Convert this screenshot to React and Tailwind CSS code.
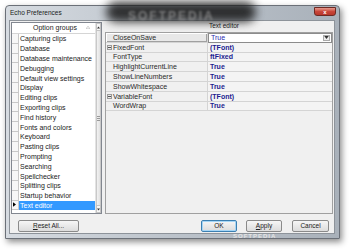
import { Fragment } from 'react'

const groups = [
  'Capturing clips',
  'Database',
  'Database maintenance',
  'Debugging',
  'Default view settings',
  'Display',
  'Editing clips',
  'Exporting clips',
  'Find history',
  'Fonts and colors',
  'Keyboard',
  'Pasting clips',
  'Prompting',
  'Searching',
  'Spellchecker',
  'Splitting clips',
  'Startup behavior',
  'Text editor',
]

const props = [
  { name: 'CloseOnSave', value: 'True', editing: true },
  { name: 'FixedFont', value: '(TFont)', expand: true },
  { name: 'FontType', value: 'ftFixed' },
  { name: 'HighlightCurrentLine', value: 'True' },
  { name: 'ShowLineNumbers', value: 'True' },
  { name: 'ShowWhitespace', value: 'True' },
  { name: 'VariableFont', value: '(TFont)', expand: true },
  { name: 'WordWrap', value: 'True' },
]

function Arrow({ up }) {
  return (
    <svg viewBox="0 0 6 4" className="h-[3px] w-[5px]">
      <path d={up ? 'M0 4 L3 0 L6 4 Z' : 'M0 0 L6 0 L3 4 Z'} fill="#333" />
    </svg>
  )
}

function Button({ children, focus, className = '' }) {
  return (
    <button
      className={
        'flex h-[12px] items-center justify-center rounded-[2px] border bg-gradient-to-b from-[#f6f6f6] to-[#dcdcdc] text-[6.5px] text-[#222] ' +
        (focus ? 'border-[#3c7fb1] shadow-[inset_0_0_0_1px_#a6d6f6] ' : 'border-[#8a8a8a] ') +
        className
      }
    >
      {children}
    </button>
  )
}

export default function App() {
  return (
    <div
      className="h-[250px] w-[350px] overflow-hidden bg-white pl-[5px] pt-[5px]"
      style={{ fontFamily: '"Liberation Sans", Arial, sans-serif' }}
    >
      <div className="relative flex h-[234px] w-[335px] flex-col rounded-t-[4px] border border-[#6b7078] bg-gradient-to-r from-[#d6dbe1] via-[#bcc3cb] to-[#a9b1ba] shadow-[2px_3px_6px_rgba(0,0,0,0.45)]">
        {/* title bar */}
        <div className="relative flex h-[14px] items-center pl-[4px]">
          <span className="text-[6.5px] text-[#1a1a1a]">Echo Preferences</span>
          <div className="absolute left-[100px] top-[-4px] h-[20px] w-[150px] rounded-full bg-[#151515] opacity-85 blur-[5px]" />
          <span className="absolute left-[122px] top-[1px] text-[12px] font-bold tracking-[2px] text-[#9a9a9a] opacity-70 blur-[0.8px]">
            SOFTPEDIA
          </span>
          <div className="absolute right-[3px] top-[1px] flex h-[9px] w-[22px] items-center justify-center rounded-b-[3px] border border-[#6d2a24] bg-gradient-to-b from-[#e59a8f] via-[#c9463a] to-[#b8372b]">
            <span className="text-[6px] font-bold leading-none text-white">x</span>
          </div>
        </div>

        {/* client area */}
        <div className="mb-[4px] ml-[3px] mr-[4px] flex flex-1 flex-col border border-[#8d939a] bg-[#f0f0f0] px-[1px] pt-[1px]">
          <div className="flex h-[192px] gap-[3px]">
            {/* option groups list */}
            <div className="flex w-[91px] border border-[#828790] bg-white">
              <div className="flex min-w-0 flex-1 flex-col">
                <div className="relative flex h-[11px] items-center border-b border-[#d5d5d5]">
                  <span className="ml-[21px] whitespace-nowrap text-[7px] text-[#222]">Option groups</span>
                  <span className="absolute right-[5px] top-[3px]">
                    <svg viewBox="0 0 6 4" className="h-[3px] w-[4px]">
                      <path d="M0 4 L3 0 L6 4 Z" fill="none" stroke="#aaa" strokeWidth="0.8" />
                    </svg>
                  </span>
                </div>
                {groups.map((g) => {
                  const sel = g === 'Text editor'
                  return (
                    <div key={g} className="flex h-[9.8px]">
                      <div className="flex w-[7px] shrink-0 items-center border-b border-r border-[#c8c8c8] bg-[#f7f7f7]">
                        {sel && (
                          <svg viewBox="0 0 4 6" className="ml-[1px] h-[5px] w-[3px]">
                            <path d="M0 0 L4 3 L0 6 Z" fill="#000" />
                          </svg>
                        )}
                      </div>
                      <div
                        className={
                          'flex flex-1 items-center whitespace-nowrap pl-[1px] text-[7px] leading-none ' +
                          (sel ? 'bg-[#3399ff] text-white' : 'text-[#1a1a1a]')
                        }
                      >
                        {g}
                      </div>
                    </div>
                  )
                })}
              </div>
              {/* scrollbar */}
              <div className="flex w-[6px] shrink-0 flex-col border-l border-[#e3e3e3] bg-[#f3f3f3]">
                <div className="flex h-[8px] items-center justify-center border border-[#c4c4c4] bg-[#f6f6f6]">
                  <Arrow up />
                </div>
                <div className="flex flex-1 items-center justify-center border-x border-[#c9c9c9] bg-gradient-to-r from-[#f2f2f2] to-[#e2e2e2]">
                  <div className="flex flex-col gap-[1px]">
                    <div className="h-px w-[3px] bg-[#999]" />
                    <div className="h-px w-[3px] bg-[#999]" />
                    <div className="h-px w-[3px] bg-[#999]" />
                  </div>
                </div>
                <div className="flex h-[8px] items-center justify-center border border-[#c4c4c4] bg-[#f6f6f6]">
                  <Arrow />
                </div>
              </div>
            </div>

            {/* property grid */}
            <div className="flex flex-1 flex-col">
              <div className="flex h-[10px] items-end pb-[1px]">
                <span className="ml-[104px] text-[6.5px] text-[#222]">Text editor</span>
              </div>
              <div className="flex flex-1 flex-col border border-[#a0a0a0] bg-[#f0f0f0]">
                <div className="grid grid-cols-[102px_1fr]">
                  {props.map((p) => (
                    <Fragment key={p.name}>
                      <div
                        className={
                          'flex h-[9.8px] items-center border-b border-r border-[#d4d4d4] ' +
                          (p.editing ? 'shadow-[inset_1px_1px_0_#fff,inset_-1px_-1px_0_#a0a0a0] bg-[#e8e8e8]' : '')
                        }
                      >
                        <div className="flex w-[7px] items-center justify-center">
                          {p.expand && (
                            <div className="flex h-[5px] w-[5px] items-center justify-center border border-[#9a9a9a] bg-[#eaeaea]">
                              <div className="h-px w-[3px] bg-[#555]" />
                            </div>
                          )}
                        </div>
                        <span className="whitespace-nowrap text-[7px] leading-none text-[#2a2a2a]">{p.name}</span>
                      </div>
                      {p.editing ? (
                        <div className="flex h-[9.8px] items-center border border-[#8c8c8c] bg-white pl-[2px]">
                          <span className="flex-1 text-[7px] leading-none text-[#2b2bb0]">True</span>
                          <div className="mr-[1px] flex h-[6px] w-[7px] items-center justify-center border border-[#aaa] bg-[#ececec]">
                            <Arrow />
                          </div>
                        </div>
                      ) : (
                        <div className="flex h-[9.8px] items-center border-b border-[#d4d4d4] bg-[#f4f4f4] pl-[2px]">
                          <span className="text-[7px] font-bold leading-none text-[#1c1c8f]">{p.value}</span>
                        </div>
                      )}
                    </Fragment>
                  ))}
                </div>
              </div>
            </div>
          </div>

          {/* buttons */}
          <div className="relative mt-[6px] flex items-center">
            <Button className="ml-[7px] w-[61px]">
              <span>
                <span className="underline">R</span>eset All...
              </span>
            </Button>
            <Button focus className="ml-[122px] w-[36px]">OK</Button>
            <Button className="ml-[9px] w-[36px]">
              <span>
                <span className="underline">A</span>pply
              </span>
            </Button>
            <Button className="ml-[10px] w-[37px]">Cancel</Button>
            <span className="absolute left-[222px] top-[12px] text-[6px] font-bold tracking-[1px] text-[#e4e4e4]">
              SOFTPEDIA
            </span>
          </div>
        </div>
      </div>
    </div>
  )
}
